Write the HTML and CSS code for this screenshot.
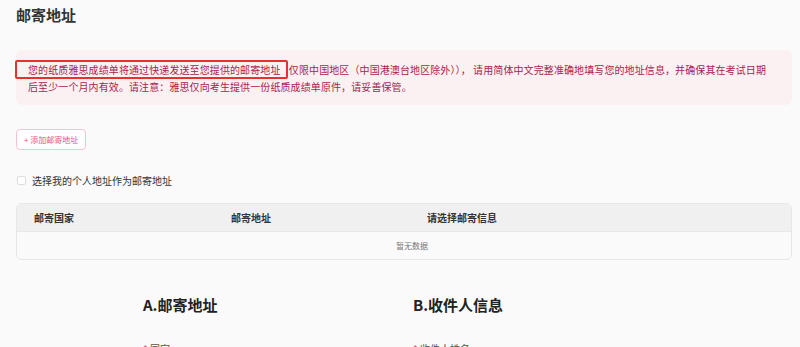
FILE: index.html
```html
<!DOCTYPE html>
<html lang="zh-CN">
<head>
    <meta charset="UTF-8">
    <meta name="viewport" content="width=device-width, initial-scale=1.0">
    <title>邮寄地址</title>
    <link rel="stylesheet" href="styles.css">
</head>
<body>
    <h2 class="page-title">邮寄地址</h2>

    <!-- Notice about paper score report -->
    <div class="notice">
        <span class="mark">您的纸质雅思成绩单将通过快递发送至您提供的邮寄地址</span> 仅限中国地区（中国港澳台地区除外））， 请用简体中文完整准确地填写您的地址信息，并确保其在考试日期<br>后至少一个月内有效。请注意：雅思仅向考生提供一份纸质成绩单原件，请妥善保管。
    </div>

    <button class="add-button">+ 添加邮寄地址</button>

    <label class="check-row">
        <span class="checkbox"></span>
        选择我的个人地址作为邮寄地址
    </label>

    <!-- Address table -->
    <div class="table">
        <div class="table-head">
            <div>邮寄国家</div>
            <div>邮寄地址</div>
            <div>请选择邮寄信息</div>
        </div>
        <div class="table-empty">暂无数据</div>
    </div>

    <section class="form-columns">
        <div class="form-col">
            <h3>A.邮寄地址</h3>
            <div class="field-label"><span class="req">*</span> 国家</div>
        </div>
        <div class="form-col">
            <h3>B.收件人信息</h3>
            <div class="field-label"><span class="req">*</span> 收件人姓名</div>
        </div>
    </section>
</body>
</html>
```

FILE: styles.css
```css
body {
    margin: 0;
    padding: 0 8px 0 16px;
    background-color: #fafafa;
    font-family: "Noto Sans CJK SC", "Noto Sans", sans-serif;
    color: #333;
}

.page-title {
    margin: 5px 0 0;
    font-size: 15px;
    line-height: 20px;
    font-weight: bold;
    color: #333;
}

/* Pink notice box */
.notice {
    margin-top: 25px;
    padding: 11px 12px 10px;
    background-color: #fbf1f3;
    border-radius: 6px;
    font-size: 10px;
    line-height: 17px;
    letter-spacing: 0.1px;
    color: #ad1a50;
}

.mark {
    position: relative;
    margin-right: 6px;
}

.mark::after {
    content: "";
    position: absolute;
    left: -13px;
    right: -7px;
    top: -2px;
    bottom: -2px;
    border: 2px solid #e8302e;
    border-radius: 2px;
}

.add-button {
    display: flex;
    align-items: center;
    margin-top: 24px;
    height: 21px;
    padding: 0 7px;
    background-color: #fff;
    border: 1px solid #f4c3cf;
    border-radius: 4px;
    font-family: inherit;
    font-size: 8px;
    color: #e5537a;
}

.check-row {
    display: flex;
    align-items: center;
    gap: 6px;
    margin-top: 23px;
    height: 14px;
    font-size: 10px;
    color: #333;
}

.checkbox {
    width: 7px;
    height: 7px;
    margin-left: 1px;
    border: 1px solid #ddd;
    border-radius: 2px;
    background-color: #fff;
}

/* Table */
.table {
    margin-top: 16px;
    border: 1px solid #e6e6e6;
    border-radius: 6px;
    overflow: hidden;
    background-color: #fafafa;
}

.table-head {
    display: grid;
    grid-template-columns: 197px 196px 1fr;
    height: 27px;
    align-items: center;
    background-color: #f0f0f0;
    border-bottom: 1px solid #e8e8e8;
    font-size: 10px;
    font-weight: bold;
    color: #333;
}

.table-head div {
    padding-left: 17px;
}

.table-empty {
    height: 27px;
    line-height: 27px;
    text-align: center;
    padding-left: 16px;
    font-size: 8px;
    color: #777;
}

/* Form column headings */
.form-columns {
    display: grid;
    grid-template-columns: 270px 1fr;
    margin-top: 35px;
    padding-left: 127px;
}

.form-col h3 {
    margin: 0;
    font-size: 15px;
    line-height: 20px;
    font-weight: bold;
    color: #222;
}

.field-label {
    margin-top: 27px;
    font-size: 10px;
    line-height: 14px;
    color: #555;
}

.req {
    color: #e5537a;
}
```
